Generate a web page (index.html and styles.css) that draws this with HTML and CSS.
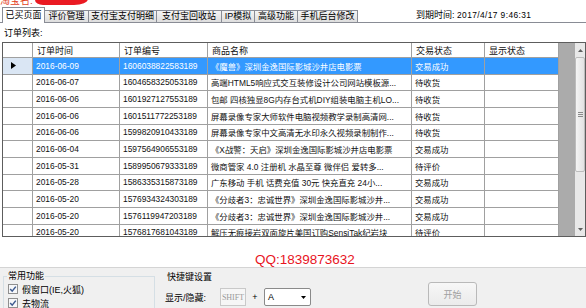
FILE: index.html
```html
<!DOCTYPE html>
<html>
<head>
<meta charset="utf-8" />
<title>已买页面</title>
<link rel="stylesheet" href="styles.css">
</head>
<body>

<div class="namebar">
    <span class="shop-label">淘宝名:</span>
    <span class="shop-mask"></span>
</div>

<div class="tabbar">
    <span class="tab active tab-bought">已买页面</span>
    <span class="tab tab-review">评价管理</span>
    <span class="tab tab-alipay">支付宝支付明细</span>
    <span class="tab tab-recycle">支付宝回收站</span>
    <span class="tab tab-ip">IP模拟</span>
    <span class="tab tab-advanced">高级功能</span>
    <span class="tab tab-mobile">手机后台修改</span>
    <span class="expiry">到期时间: <span class="time">2017/4/17 9:46:31</span></span>
</div>

<div class="list-title">订单列表:</div>

<div class="grid">
    <div class="grid-rows">
        <div class="row head">
            <span class="cell c0"></span>
            <span class="cell c1">订单时间</span>
            <span class="cell c2">订单编号</span>
            <span class="cell c3">商品名称</span>
            <span class="cell c4">交易状态</span>
            <span class="cell c5">显示状态</span>
        </div>
        <div class="row selected">
            <span class="cell c0"><svg class="pointer" width="5" height="7" viewBox="0 0 5 7"><polygon points="0,0 5,3.5 0,7" fill="#000"/></svg></span>
            <span class="cell c1">2016-06-09</span>
            <span class="cell c2">1606038822583189</span>
            <span class="cell c3">《魔兽》深圳金逸国际影城沙井店电影票</span>
            <span class="cell c4">交易成功</span>
            <span class="cell c5"></span>
        </div>
        <div class="row">
            <span class="cell c0"></span>
            <span class="cell c1">2016-06-07</span>
            <span class="cell c2">1604658325053189</span>
            <span class="cell c3">高端HTML5响应式交互装修设计公司网站模板源...</span>
            <span class="cell c4">待收货</span>
            <span class="cell c5"></span>
        </div>
        <div class="row">
            <span class="cell c0"></span>
            <span class="cell c1">2016-06-06</span>
            <span class="cell c2">1601927127553189</span>
            <span class="cell c3">包邮 四核独显8G内存台式机DIY组装电脑主机LO...</span>
            <span class="cell c4">待收货</span>
            <span class="cell c5"></span>
        </div>
        <div class="row">
            <span class="cell c0"></span>
            <span class="cell c1">2016-06-06</span>
            <span class="cell c2">1601511772253189</span>
            <span class="cell c3">屏幕录像专家大师软件电脑视频教学录制高清网...</span>
            <span class="cell c4">待收货</span>
            <span class="cell c5"></span>
        </div>
        <div class="row">
            <span class="cell c0"></span>
            <span class="cell c1">2016-06-06</span>
            <span class="cell c2">1599820910433189</span>
            <span class="cell c3">屏幕录像专家中文高清无水印永久视频录制制作...</span>
            <span class="cell c4">待收货</span>
            <span class="cell c5"></span>
        </div>
        <div class="row">
            <span class="cell c0"></span>
            <span class="cell c1">2016-06-04</span>
            <span class="cell c2">1597564906553189</span>
            <span class="cell c3">《X战警：天启》深圳金逸国际影城沙井店电影票</span>
            <span class="cell c4">交易成功</span>
            <span class="cell c5"></span>
        </div>
        <div class="row">
            <span class="cell c0"></span>
            <span class="cell c1">2016-05-31</span>
            <span class="cell c2">1589950679333189</span>
            <span class="cell c3">微商管家 4.0 注册机 水晶至尊 微伴侣 爱转多...</span>
            <span class="cell c4">待评价</span>
            <span class="cell c5"></span>
        </div>
        <div class="row">
            <span class="cell c0"></span>
            <span class="cell c1">2016-05-28</span>
            <span class="cell c2">1586335315873189</span>
            <span class="cell c3">广东移动 手机 话费充值 30元 快充直充 24小...</span>
            <span class="cell c4">交易成功</span>
            <span class="cell c5"></span>
        </div>
        <div class="row">
            <span class="cell c0"></span>
            <span class="cell c1">2016-05-20</span>
            <span class="cell c2">1576934324303189</span>
            <span class="cell c3">《分歧者3：忠诚世界》深圳金逸国际影城沙井...</span>
            <span class="cell c4">交易成功</span>
            <span class="cell c5"></span>
        </div>
        <div class="row">
            <span class="cell c0"></span>
            <span class="cell c1">2016-05-20</span>
            <span class="cell c2">1576119947203189</span>
            <span class="cell c3">《分歧者3：忠诚世界》深圳金逸国际影城沙井...</span>
            <span class="cell c4">交易成功</span>
            <span class="cell c5"></span>
        </div>
        <div class="row">
            <span class="cell c0"></span>
            <span class="cell c1">2016-05-20</span>
            <span class="cell c2">1576817681043189</span>
            <span class="cell c3">解压无痕接岩双面旋片美国订购SensiTak纪岩块</span>
            <span class="cell c4">待评价</span>
            <span class="cell c5"></span>
        </div>
    </div>
    <div class="grid-filler"></div>
    <div class="scrollbar">
        <div class="sb-arrow"><svg width="5" height="3" viewBox="0 0 5 3"><polygon points="0,3 2.5,0 5,3" fill="#606060"/></svg></div>
        <div class="sb-thumb"><span class="grip"></span></div>
        <div class="sb-track"></div>
        <div class="sb-arrow"><svg width="5" height="3" viewBox="0 0 5 3"><polygon points="0,0 5,0 2.5,3" fill="#606060"/></svg></div>
    </div>
</div>

<div class="qq-row">
    <span class="qq">QQ:1839873632</span>
</div>

<div class="panel">
    <fieldset class="options">
        <legend>常用功能</legend>
        <div class="check-row">
            <svg class="checkbox" width="10" height="10" viewBox="0 0 10 10"><rect x="0.5" y="0.5" width="9" height="9" fill="#f6f7f9" stroke="#8f8f8f"/><path d="M2.2 5 L4.2 7.2 L7.8 2.6" fill="none" stroke="#3d5a8f" stroke-width="1.5"/></svg>
            <span>假窗口(IE,火狐)</span>
        </div>
        <div class="check-row">
            <svg class="checkbox" width="10" height="10" viewBox="0 0 10 10"><rect x="0.5" y="0.5" width="9" height="9" fill="#f6f7f9" stroke="#8f8f8f"/><path d="M2.2 5 L4.2 7.2 L7.8 2.6" fill="none" stroke="#3d5a8f" stroke-width="1.5"/></svg>
            <span>去物流</span>
        </div>
    </fieldset>

    <div class="hotkeys">
        <div class="hotkeys-title">快捷键设置</div>
        <div class="hotkey-row">
            <span class="hotkey-label">显示/隐藏:</span>
            <span class="shift-key">SHIFT</span>
            <span class="plus">+</span>
            <span class="key-select">A<svg width="5" height="3" viewBox="0 0 5 3"><polygon points="0,0 5,0 2.5,3" fill="#000"/></svg></span>
        </div>
    </div>

    <button class="start" disabled>开始</button>
</div>

</body>
</html>
```

FILE: styles.css
```css
body {
    margin: 0;
    width: 586px;
    height: 308px;
    overflow: hidden;
    background: #fff;
    font-family: "Liberation Sans", "Noto Sans CJK SC", sans-serif;
    font-size: 9px;
    color: #000;
}

/* shop name strip, cut off by the top edge */
.namebar {
    display: flex;
    align-items: flex-end;
    height: 7px;
    overflow: hidden;
}

.shop-label {
    color: #e2401c;
    font-size: 10px;
    line-height: 12px;
}

.shop-mask {
    width: 53px;
    height: 11px;
    margin-left: 2px;
    margin-bottom: 2px;
    background: #ea1a22;
    border-radius: 0 0 14px 8px / 0 0 6px 5px;
}

/* tabs */
.tabbar {
    display: flex;
    align-items: flex-end;
    height: 15px;
    padding-left: 2px;
    border-bottom: 1px solid #898c95;
}

.tab {
    box-sizing: border-box;
    height: 12px;
    border: 1px solid #898c95;
    border-bottom: none;
    background: linear-gradient(#f4f4f4, #dedede);
    text-align: center;
    line-height: 11px;
}

.tab + .tab {
    margin-left: -1px;
}

.tab.active {
    z-index: 1;
    height: 16px;
    margin-bottom: -1px;
    background: #fff;
    line-height: 15px;
}

.tab-bought { width: 43px; }
.tab-review { width: 45px; }
.tab-alipay { width: 69px; }
.tab-recycle { width: 66px; }
.tab-ip { width: 34px; }
.tab-advanced { width: 44px; }
.tab-mobile { width: 61px; }

.expiry {
    align-self: center;
    margin-left: 58px;
    white-space: nowrap;
}

.expiry .time {
    font-size: 8.4px;
    letter-spacing: 0.4px;
}

.list-title {
    height: 17px;
    padding: 2px 0 0 4px;
    line-height: 17px;
}

/* order grid */
.grid {
    display: flex;
    box-sizing: border-box;
    height: 195px;
    margin-left: 2px;
    border: 1px solid #5d5d5d;
}

.grid-rows {
    width: 556px;
    overflow: hidden;
}

.grid-filler {
    width: 16px;
    background: #ababab;
}

.row {
    display: flex;
    box-sizing: border-box;
    height: 16.67px;
    border-bottom: 1px solid #a0a0a0;
}

.row.head {
    height: 15px;
}

.cell {
    display: flex;
    align-items: center;
    box-sizing: border-box;
    padding-left: 3px;
    border-right: 1px solid #a0a0a0;
    white-space: nowrap;
    overflow: hidden;
    font-size: 8.4px;
    color: #111;
}

.row.head .cell {
    padding-left: 4px;
    font-size: 9px;
}

.row.selected .cell {
    background: #3399ff;
    color: #fff;
}

.row.selected .c0 {
    background: #dae6f4;
}

.pointer {
    margin-left: 5px;
}

.c0 { width: 30px; }
.c1 { width: 87px; }
.c2 { width: 88px; }
.c3 { width: 204px; }
.c4 { width: 73px; }
.c5 { width: 74px; }

.scrollbar {
    display: flex;
    flex-direction: column;
    width: 10px;
    background: #e8e8e8;
}

.sb-arrow {
    display: flex;
    align-items: center;
    justify-content: center;
    height: 14px;
}

.sb-thumb {
    display: flex;
    align-items: center;
    justify-content: center;
    box-sizing: border-box;
    height: 115px;
    border: 1px solid #bcbcbc;
    border-radius: 2px;
    background: linear-gradient(90deg, #f4f4f4, #e2e2e2);
}

.grip {
    width: 5px;
    height: 5px;
    background: repeating-linear-gradient(#8a8a8a 0, #8a8a8a 1px, transparent 1px, transparent 2px);
}

.sb-track {
    flex: 1;
}

.qq-row {
    display: flex;
    align-items: flex-end;
    height: 30px;
    padding-left: 255px;
}

.qq {
    color: #e8141e;
    font-size: 13.5px;
    line-height: 14px;
}

/* bottom control panel */
.panel {
    display: flex;
    align-items: flex-start;
    height: 41px;
    border-top: 1px solid #d4d4d4;
    background: #f0f0f0;
}

.options {
    box-sizing: border-box;
    width: 152px;
    min-width: 0;
    margin: 2px 0 0 3px;
    padding: 0 0 0 4px;
    border: 1px solid #d5dfe5;
    border-bottom: none;
}

.options legend {
    margin-left: -1px;
    padding: 0 1px;
    line-height: 12px;
}

.check-row {
    display: flex;
    align-items: center;
    height: 14px;
}

.checkbox {
    margin-right: 4px;
}

.hotkeys {
    margin-left: 8px;
    padding-top: 2px;
}

.hotkeys-title {
    padding-left: 4px;
    line-height: 14px;
}

.hotkey-row {
    display: flex;
    align-items: center;
    height: 18px;
    margin-top: 4px;
    padding-left: 2px;
}

.hotkey-label {
    width: 55px;
}

.shift-key {
    display: flex;
    align-items: center;
    justify-content: center;
    box-sizing: border-box;
    width: 26px;
    height: 18px;
    border: 1px solid #c9c9c9;
    background: #f6f6f6;
    font-family: "Liberation Serif", serif;
    font-size: 8px;
    color: #999;
}

.plus {
    width: 18px;
    text-align: center;
}

.key-select {
    display: flex;
    align-items: center;
    justify-content: space-between;
    box-sizing: border-box;
    width: 47px;
    height: 18px;
    padding: 0 4px 0 3px;
    border: 1px solid #8a8a8a;
    border-radius: 2px;
    background: #fff;
}

.start {
    width: 49px;
    height: 24px;
    margin: 14px 0 0 117px;
    padding: 0;
    border: 1px solid #b9b9b9;
    border-radius: 3px;
    background: linear-gradient(#f7f7f7, #ebebeb);
    font-family: "Liberation Sans", "Noto Sans CJK SC", sans-serif;
    font-size: 9px;
    color: #a0a0a0;
}
```
